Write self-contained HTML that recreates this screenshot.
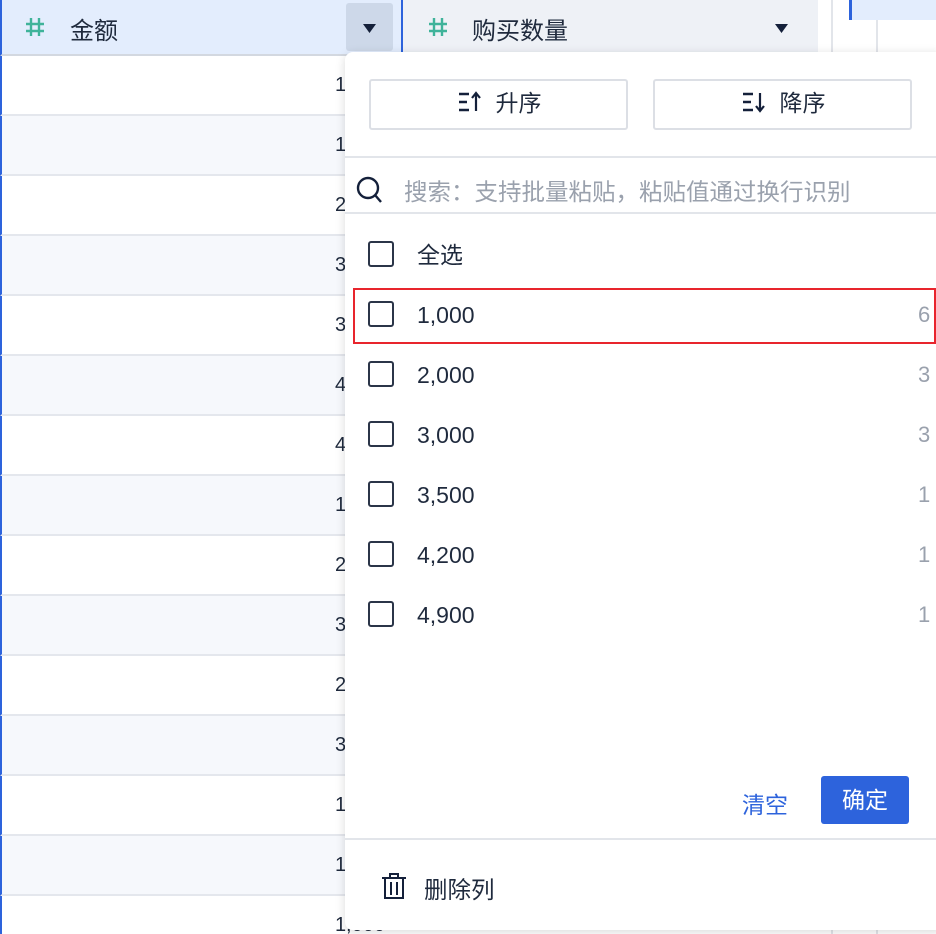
<!DOCTYPE html>
<html><head><meta charset="utf-8"><style>
*{box-sizing:border-box;margin:0;padding:0}
html,body{width:936px;height:934px;overflow:hidden}
body{background:#fff;font-family:"Liberation Sans","Noto Sans CJK SC",sans-serif;color:#1f2a3d;position:relative}
.abs{position:absolute}
.hdr1{left:0;top:0;width:403px;height:56px;background:#e3edfd;border-left:2px solid #2d63dc;border-right:2px solid #2d63dc;border-bottom:2px solid #d3d8e0}
.hdr2{left:403px;top:0;width:415px;height:56px;background:#eef1f6;border-bottom:2px solid #d3d8e0}
.row{left:0;width:403px;height:60px;border-left:2px solid #2d63dc;border-bottom:2px solid #e4e7ed;font-size:20px;text-align:right;padding-right:18px;line-height:58px}
.pop{left:345px;top:52px;width:600px;height:878px;background:#fff;border-radius:8px;box-shadow:0 2px 10px rgba(0,0,0,.15)}
.btn{top:27px;width:259px;height:51px;border:2px solid #dcdfe5;border-radius:3px;font-size:23px;text-align:center;line-height:45px}
.cb{width:26px;height:26px;border:2px solid #2b3548;border-radius:3px;left:23px}
.it{left:0;width:600px;height:60px}
.it .lbl{position:absolute;left:72px;top:16px;font-size:23px;line-height:30px}
.it .cnt{position:absolute;left:573px;top:16px;font-size:22px;line-height:30px;color:#9aa1ad}
</style></head><body>
<div class="abs hdr1"><svg class="abs" style="left:22px;top:16px" width="22" height="22"><path d="M7 2v18M15 2v18M2 8h18M2 15h18" stroke="#3fb39a" stroke-width="2.4"/></svg><span class="abs" style="left:68px;top:11px;font-size:24px">金额</span>
<div class="abs" style="left:344px;top:3px;width:47px;height:48px;background:#cdd8e9;border-radius:3px"><svg width="47" height="48"><path d="M17 21h13l-6.5 9z" fill="#14203a"/></svg></div></div>
<div class="abs hdr2"><svg class="abs" style="left:24px;top:16px" width="22" height="22"><path d="M7 2v18M15 2v18M2 8h18M2 15h18" stroke="#3fb39a" stroke-width="2.4"/></svg><span class="abs" style="left:69px;top:11px;font-size:24px">购买数量</span>
<svg class="abs" style="left:370px;top:3px" width="30" height="48"><path d="M2 21h13l-6.5 9z" fill="#14203a"/></svg></div>
<div class="abs" style="left:818px;top:0;width:14px;height:934px;background:#fff"></div>
<div class="abs" style="left:831px;top:0;width:2px;height:934px;background:#e2e5ea"></div>
<div class="abs" style="left:849px;top:0;width:87px;height:20px;background:#e3edfd;border-left:3px solid #2d63dc"></div>
<div class="abs" style="left:876px;top:20px;width:2px;height:914px;background:#e2e5ea"></div>
<div class="abs row" style="top:56px;background:#fff">1,000</div>
<div class="abs row" style="top:116px;background:#f6f8fc">1,000</div>
<div class="abs row" style="top:176px;background:#fff">2,000</div>
<div class="abs row" style="top:236px;background:#f6f8fc">3,000</div>
<div class="abs row" style="top:296px;background:#fff">3,500</div>
<div class="abs row" style="top:356px;background:#f6f8fc">4,200</div>
<div class="abs row" style="top:416px;background:#fff">4,900</div>
<div class="abs row" style="top:476px;background:#f6f8fc">1,000</div>
<div class="abs row" style="top:536px;background:#fff">2,000</div>
<div class="abs row" style="top:596px;background:#f6f8fc">3,000</div>
<div class="abs row" style="top:656px;background:#fff">2,000</div>
<div class="abs row" style="top:716px;background:#f6f8fc">3,000</div>
<div class="abs row" style="top:776px;background:#fff">1,000</div>
<div class="abs row" style="top:836px;background:#f6f8fc">1,000</div>
<div class="abs row" style="top:896px;background:#fff">1,000</div>
<div class="abs pop">
<div class="abs btn" style="left:24px"><svg width="30" height="24" style="vertical-align:-3px;margin-right:10px"><path d="M3 4h10M3 12h8M3 20h10" stroke="#14203a" stroke-width="2.5"/><path d="M20 21V4M16 8l4-5 4 5" stroke="#14203a" stroke-width="2.2" fill="none"/></svg>升序</div>
<div class="abs btn" style="left:308px"><svg width="30" height="24" style="vertical-align:-3px;margin-right:10px"><path d="M3 4h10M3 12h8M3 20h10" stroke="#14203a" stroke-width="2.5"/><path d="M20 3v17M16 16l4 5 4-5" stroke="#14203a" stroke-width="2.2" fill="none"/></svg>降序</div>
<div class="abs" style="left:0;top:104px;width:600px;height:2px;background:#e2e5ea"></div>
<svg class="abs" style="left:10px;top:123px" width="30" height="32"><circle cx="13" cy="13" r="10" stroke="#14203a" stroke-width="2.4" fill="none"/><path d="M20 20l6 7" stroke="#14203a" stroke-width="2.4"/></svg>
<div class="abs" style="left:59px;top:121px;font-size:23.5px;color:#9aa1ad;white-space:nowrap">搜索：支持批量粘贴，粘贴值通过换行识别</div>
<div class="abs" style="left:0;top:160px;width:600px;height:2px;background:#e2e5ea"></div>
<div class="abs it" style="top:172px"><div class="abs cb" style="top:17px"></div><span class="lbl">全选</span></div>
<div class="abs it" style="top:232px"><div class="abs cb" style="top:17px"></div><span class="lbl">1,000</span><span class="cnt">6</span></div>
<div class="abs" style="left:8px;top:236px;width:583px;height:56px;border:2px solid #e8252d"></div>
<div class="abs it" style="top:292px"><div class="abs cb" style="top:17px"></div><span class="lbl">2,000</span><span class="cnt">3</span></div>
<div class="abs it" style="top:352px"><div class="abs cb" style="top:17px"></div><span class="lbl">3,000</span><span class="cnt">3</span></div>
<div class="abs it" style="top:412px"><div class="abs cb" style="top:17px"></div><span class="lbl">3,500</span><span class="cnt">1</span></div>
<div class="abs it" style="top:472px"><div class="abs cb" style="top:17px"></div><span class="lbl">4,200</span><span class="cnt">1</span></div>
<div class="abs it" style="top:532px"><div class="abs cb" style="top:17px"></div><span class="lbl">4,900</span><span class="cnt">1</span></div>
<div class="abs" style="left:397px;top:734px;font-size:23px;color:#2d63dc">清空</div>
<div class="abs" style="left:476px;top:724px;width:88px;height:48px;background:#2d63dc;border-radius:3px;color:#fff;font-size:23px;text-align:center;line-height:48px">确定</div>
<div class="abs" style="left:0;top:786px;width:600px;height:2px;background:#e2e5ea"></div>
<svg class="abs" style="left:36px;top:820px" width="26" height="28"><path d="M1 6h24M9 6V2h8v4M4 6v20h18V6M10 10v13M16 10v13" stroke="#14203a" stroke-width="2" fill="none"/></svg>
<div class="abs" style="left:79px;top:819px;font-size:23.5px">删除列</div>
</div>
</body></html>
